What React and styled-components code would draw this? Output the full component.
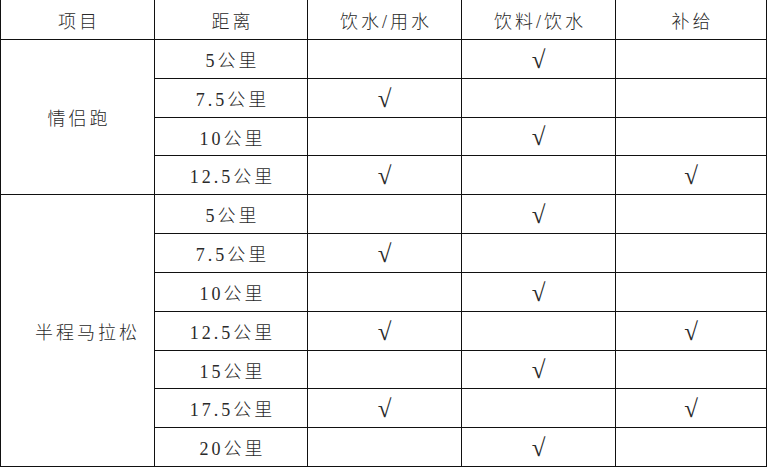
import styled, { createGlobalStyle } from "styled-components";

const GlobalStyle = createGlobalStyle`
  html, body {
    margin: 0;
    padding: 0;
    background: #fff;
  }
`;

const Sheet = styled.div`
  display: grid;
  grid-template-columns: 153px 152px 153px 153px 150px;
  grid-template-rows: 39px 38px 38px 37px 38px 38px 38px 38px 38px 37px 38px 38px;
  gap: 1px;
  width: max-content;
  padding: 0 1px 1px 1px;
  background: #111;
  font-family: "Liberation Serif", "Noto Sans CJK SC", serif;
  font-size: 18px;
  font-weight: 300;
  color: #2a2a2a;
`;

const Cell = styled.div`
  display: flex;
  align-items: center;
  justify-content: center;
  background: #fff;
  letter-spacing: 3px;
  padding-left: ${(p) => p.indent || 3}px;
  white-space: nowrap;
  grid-row: ${(p) => (p.span ? `span ${p.span}` : "auto")};
`;

const Tick = styled.span`
  font-family: "Liberation Serif", "DejaVu Serif", serif;
  font-size: 25px;
  letter-spacing: 0;
  margin-left: -3px;
  line-height: 1;
`;

const HEAD = ["项目", "距离", "饮水/用水", "饮料/饮水", "补给"];

// 每行: 距离, 饮水/用水, 饮料/饮水, 补给
const GROUPS = [
  {
    name: "情侣跑",
    indent: 3,
    rows: [
      ["5公里", 0, 1, 0],
      ["7.5公里", 1, 0, 0],
      ["10公里", 0, 1, 0],
      ["12.5公里", 1, 0, 1],
    ],
  },
  {
    name: "半程马拉松",
    indent: 20,
    rows: [
      ["5公里", 0, 1, 0],
      ["7.5公里", 1, 0, 0],
      ["10公里", 0, 1, 0],
      ["12.5公里", 1, 0, 1],
      ["15公里", 0, 1, 0],
      ["17.5公里", 1, 0, 1],
      ["20公里", 0, 1, 0],
    ],
  },
];

const Mark = ({ on }) => <Cell>{on ? <Tick>√</Tick> : null}</Cell>;

const App = () => {
  return (
    <>
      <GlobalStyle />
      <Sheet>
        {HEAD.map((h) => (
          <Cell key={h}>{h}</Cell>
        ))}
        {GROUPS.map((g) =>
          g.rows.map((r, i) => [
            i === 0 && (
              <Cell key={g.name} span={g.rows.length} indent={g.indent}>
                {g.name}
              </Cell>
            ),
            <Cell key={`${g.name}-${r[0]}`}>{r[0]}</Cell>,
            <Mark key={`${g.name}-${r[0]}-a`} on={r[1]} />,
            <Mark key={`${g.name}-${r[0]}-b`} on={r[2]} />,
            <Mark key={`${g.name}-${r[0]}-c`} on={r[3]} />,
          ])
        )}
      </Sheet>
    </>
  );
};

export default App;
